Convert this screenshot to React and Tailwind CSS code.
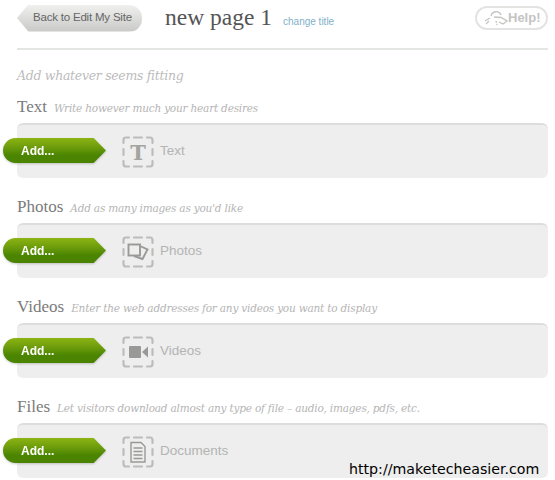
const sections = [
  { title: "Text", desc: "Write however much your heart desires", label: "Text", icon: "text" },
  { title: "Photos", desc: "Add as many images as you'd like", label: "Photos", icon: "photos" },
  { title: "Videos", desc: "Enter the web addresses for any videos you want to display", label: "Videos", icon: "videos" },
  { title: "Files", desc: "Let visitors download almost any type of file – audio, images, pdfs, etc.", label: "Documents", icon: "docs" },
];

function ElementIcon({ type }) {
  return (
    <svg width="32" height="32" viewBox="0 0 32 32" fill="none" className="shrink-0">
      <g stroke="#bcbdbb" strokeWidth="2.2" strokeLinecap="round">
        <path d="M1.5 7 V4 Q1.5 1.5 4 1.5 H7 M12 1.5 H20 M25 1.5 H28 Q30.5 1.5 30.5 4 V7 M30.5 13 V19 M30.5 25 V28 Q30.5 30.5 28 30.5 H25 M20 30.5 H12 M7 30.5 H4 Q1.5 30.5 1.5 28 V25 M1.5 19 V13" />
      </g>
      {type === "text" && (
        <text x="16" y="23.5" textAnchor="middle" fontFamily="'DejaVu Serif', serif" fontSize="21" fontWeight="700" fill="#a3a4a2">T</text>
      )}
      {type === "photos" && (
        <g stroke="#999a98" strokeWidth="1.9" fill="none">
          <rect x="6.5" y="8.5" width="11.5" height="11" />
          <path d="M18 10 L25.5 13.5 L20.5 23 L12 20" />
        </g>
      )}
      {type === "videos" && (
        <g fill="#999a98">
          <rect x="7" y="10" width="12" height="12" rx="1" />
          <path d="M20 16 L26 10.5 V21.5 Z" />
        </g>
      )}
      {type === "docs" && (
        <g stroke="#999a98" strokeWidth="1.4" fill="none">
          <path d="M9 6.5 H19 L23 10.5 V26 H9 Z" />
          <path d="M11.5 12 H20.5 M11.5 15.5 H20.5 M11.5 19 H20.5 M11.5 22.5 H20.5" />
        </g>
      )}
    </svg>
  );
}

function Section({ s }) {
  return (
    <section className="h-[100px]">
      <div className="flex items-baseline h-[27px] pl-[17px]">
        <h2 className="text-[17px] leading-[21px] text-[#7b7b7b] font-['Liberation_Serif',serif]">{s.title}</h2>
        <p className="ml-[7px] text-[10.5px] italic text-[#b5b5b5] font-['DejaVu_Serif',serif] tracking-[-0.2px]">{s.desc}</p>
      </div>
      <div className="relative ml-[17px] w-[531px] h-[55px] rounded-[6px] bg-[#edeeed] border-t-2 border-[#dcdddc] flex items-center pl-[105px]">
        <div className="absolute left-[-14px] top-[13px] drop-shadow-[0_1px_1px_rgba(0,0,0,0.2)]">
          <div className="w-[103px] h-[25px] bg-gradient-to-b from-[#8db413] via-[#6a9a0c] via-40% to-[#4a8400] to-70% rounded-l-[13px] [clip-path:polygon(0_0,88%_0,100%_50%,88%_100%,0_100%)] flex items-center pl-[18px]">
            <span className="text-white font-bold text-[12px] font-['Liberation_Sans',sans-serif]">Add...</span>
          </div>
        </div>
        <ElementIcon type={s.icon} />
        <span className="ml-[6px] text-[13.5px] text-[#b4b4b4] font-['Liberation_Sans',sans-serif]">{s.label}</span>
      </div>
    </section>
  );
}

export default function App() {
  return (
    <div className="relative w-[555px] h-[480px] overflow-hidden bg-white">
      <header className="flex items-center h-[50px] mx-[17px] w-[531px] border-b-2 border-[#e4e6e4] pb-[15px]">
        <div className="w-[125px] h-[27px] mt-[3px] bg-gradient-to-b from-[#f0f0ee] to-[#c9cac8] rounded-r-[13px] [clip-path:polygon(0_50%,9%_0,100%_0,100%_100%,9%_100%)] flex items-center pl-[16px] shrink-0">
          <span className="text-[11.5px] text-[#666] font-['Liberation_Sans',sans-serif] tracking-[-0.2px]">Back to Edit My Site</span>
        </div>
        <h1 className="ml-[23px] mt-[3px] text-[23.5px] text-[#555] font-['Liberation_Serif',serif] whitespace-nowrap">new page 1</h1>
        <a className="ml-[11px] mt-[9px] text-[10px] text-[#7fb0c9] font-['Liberation_Sans',sans-serif]">change title</a>
        <div className="ml-auto w-[73px] h-[24px] mt-[2px] rounded-full border-2 border-[#e3e3e1] flex items-center pl-[6px] shrink-0">
          <svg width="25" height="17" viewBox="0 0 25 17" fill="none" stroke="#c4c4c2" strokeWidth="1.3">
            <path d="M8 7 C9 2 16 1 18 6" />
            <path d="M2 12 L7 9 M3 15 L6 12" />
            <path d="M11 8 L18 8.5 L24 12 L20 15 L16 13" />
            <path d="M13 12 L14 16" strokeDasharray="2 1" />
          </svg>
          <span className="text-[13px] font-bold text-[#c4c4c2] font-['Liberation_Sans',sans-serif]">Help!</span>
        </div>
      </header>
      <p className="pl-[17px] mt-[15px] h-[31px] text-[12.5px] leading-[22px] italic text-[#bcbcbc] font-['DejaVu_Serif',serif] tracking-[-0.3px]">Add whatever seems fitting</p>
      <main>
        {sections.map((s) => (
          <Section key={s.title} s={s} />
        ))}
      </main>
      <div className="absolute left-[349px] top-[461px] text-[14.2px] leading-[17px] text-black font-['DejaVu_Sans',sans-serif]">http://maketecheasier.com</div>
    </div>
  );
}
